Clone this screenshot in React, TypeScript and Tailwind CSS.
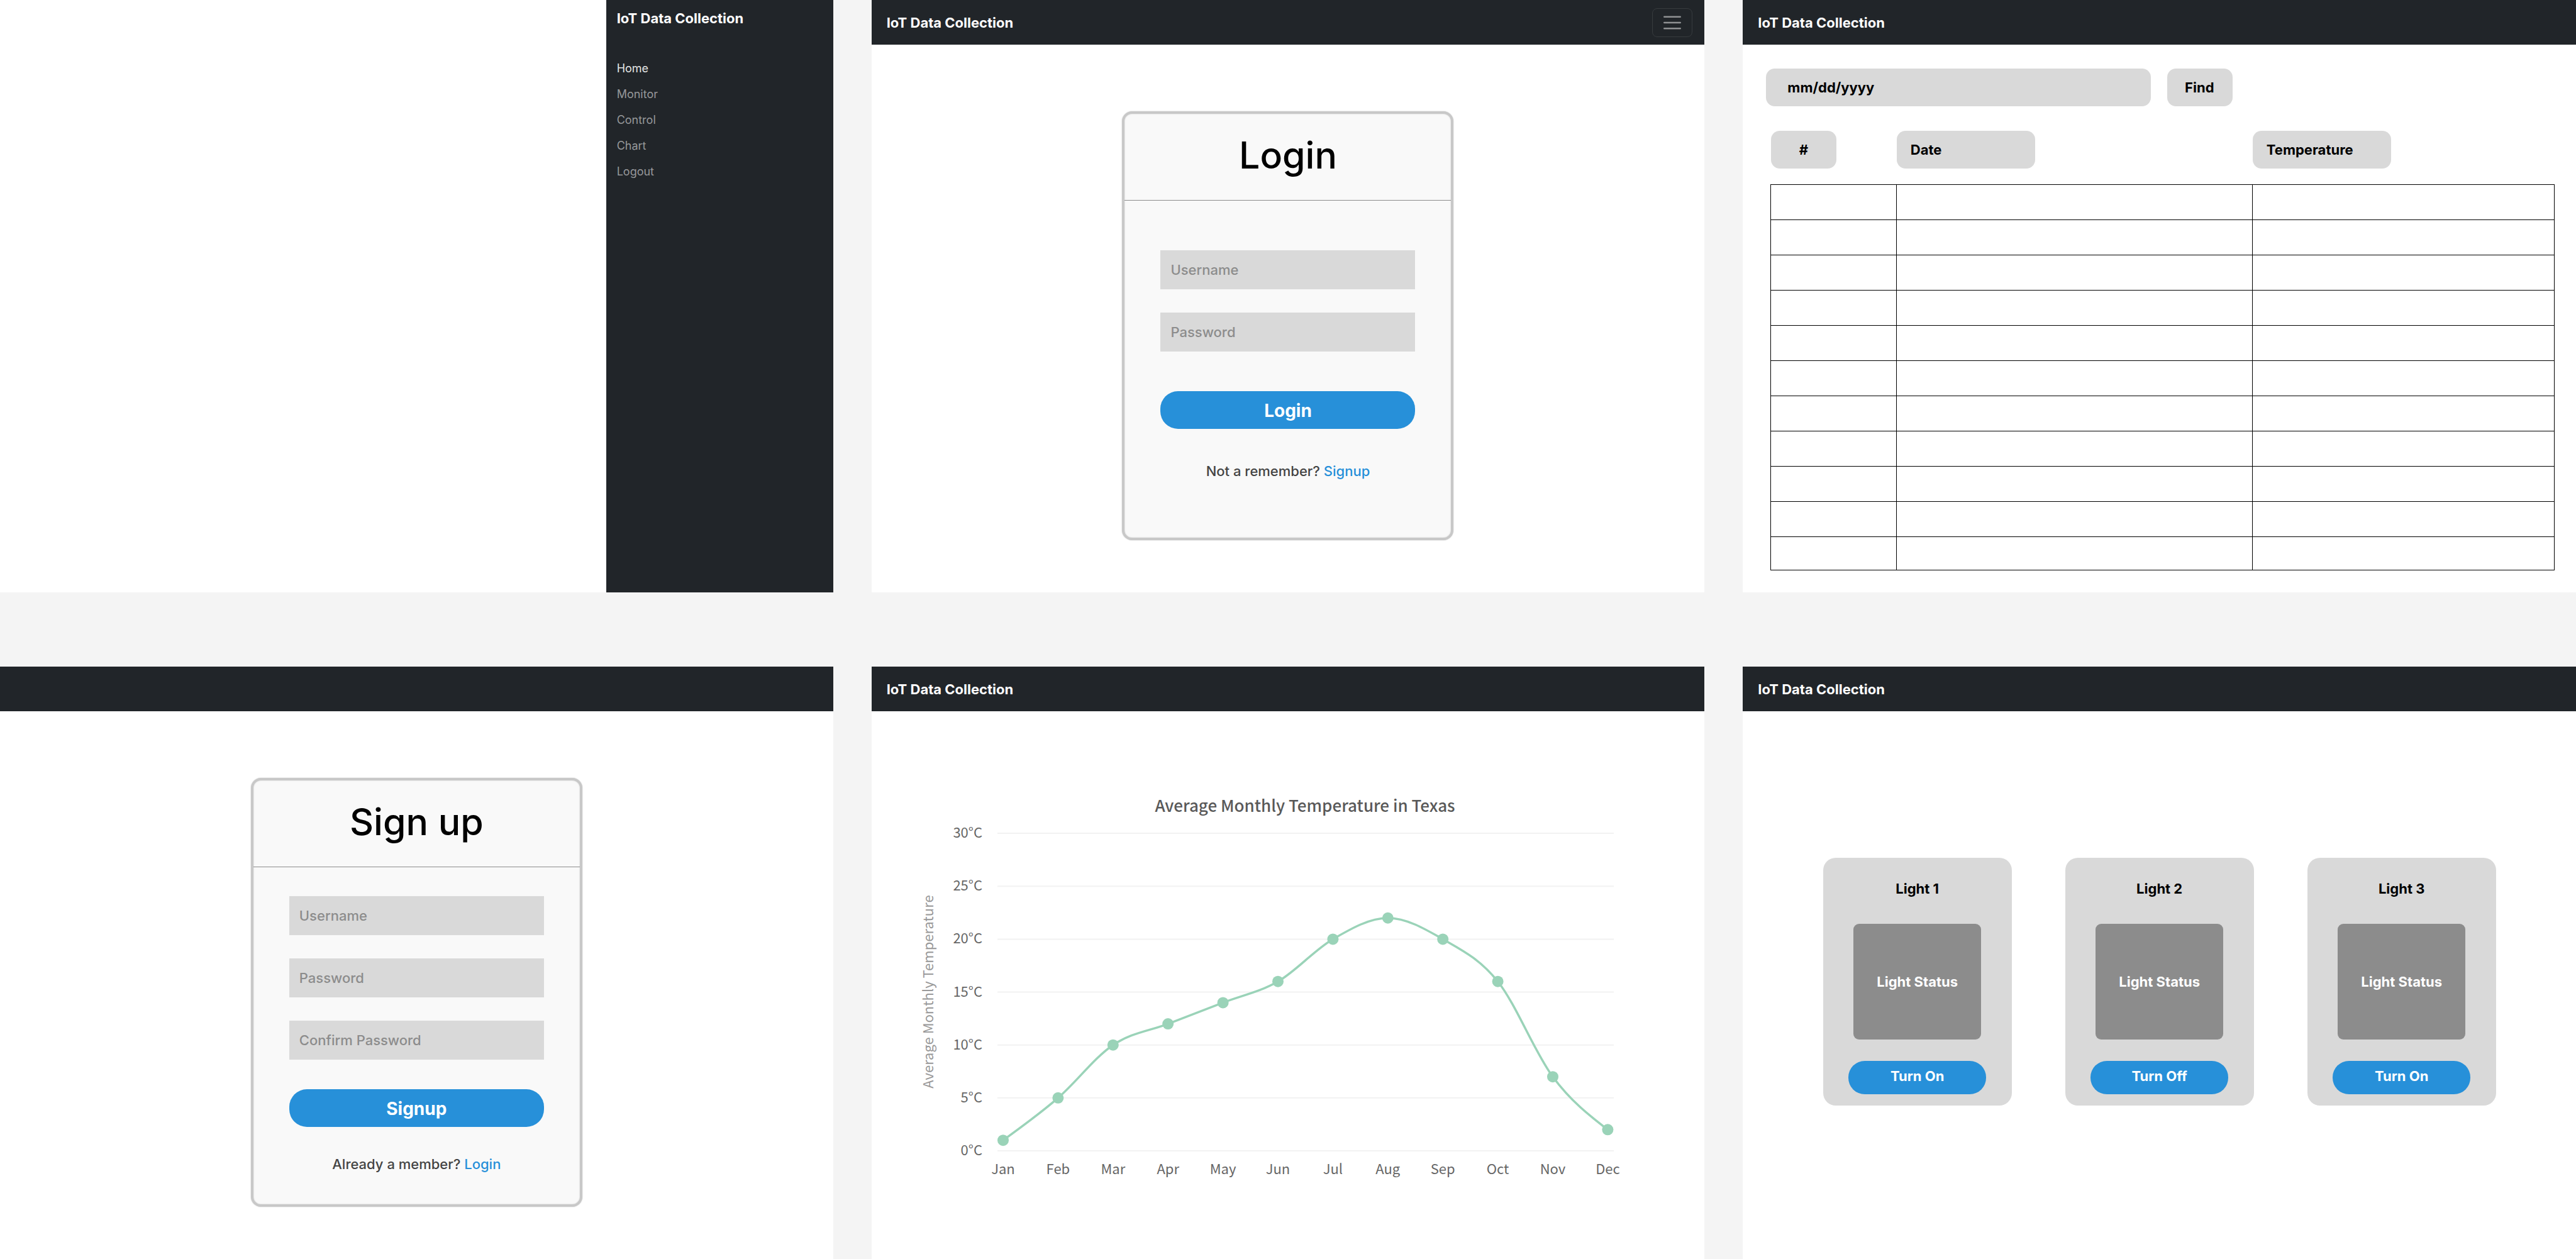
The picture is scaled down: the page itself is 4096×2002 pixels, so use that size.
import type { ReactNode } from "react";

function Screen({ children }: { children: ReactNode }) {
  return <section className="flex min-h-[942px] flex-col bg-white">{children}</section>;
}

function NavBar({ title, children }: { title?: string; children?: ReactNode }) {
  return (
    <header className="flex h-[71px] items-center justify-between bg-[#212529] pr-3 pl-6">
      {title && <span className="text-[22px] leading-7 font-bold text-white">{title}</span>}
      {children}
    </header>
  );
}

function MenuScreen() {
  const links = ["Home", "Monitor", "Control", "Chart", "Logout"];
  return (
    <Screen>
      <aside className="flex w-[361px] flex-1 flex-col gap-[45px] self-end bg-[#212529] pt-[15px] pl-[17px]">
        <span className="text-[22px] leading-7 font-bold text-white">IoT Data Collection</span>
        <nav className="flex flex-col">
          {links.map((l) => (
            <a
              key={l}
              href="#"
              className={
                l === "Home"
                  ? "text-lg leading-[41px] text-[#e4e5e5]"
                  : "text-lg leading-[41px] text-[#96989a]"
              }
            >
              {l}
            </a>
          ))}
        </nav>
      </aside>
    </Screen>
  );
}

function Field({ label }: { label: string }) {
  return (
    <input
      aria-label={label}
      type={label.includes("Password") ? "password" : "text"}
      placeholder={label}
      className="block h-[62px] w-full bg-[#d9d9d9] px-4 text-[22px] font-medium text-black placeholder:text-[#8c8c8c] placeholder:opacity-100"
    />
  );
}

function AuthCard(props: {
  title: string;
  fields: string[];
  action: string;
  prompt: string;
  link: string;
  roomy?: boolean;
}) {
  return (
    <form className="mx-auto mt-[106px] flex h-[682px] w-[527px] flex-col rounded-2xl border-4 border-[#c8c8c8] bg-[#f9f9f9] shadow-[0_0_2px_#c8c8c8,inset_0_0_2px_#c8c8c8]">
      <h1 className="flex h-[138px] items-center justify-center border-b border-[#8c8c8c] pb-1 text-[59px] font-medium text-black">
        {props.title}
      </h1>
      <div className={props.roomy ? "flex flex-col px-[57px] pt-[79px]" : "flex flex-col px-[57px] pt-[46px]"}>
        <div className="flex flex-col gap-[37px]">
          {props.fields.map((f) => (
            <Field key={f} label={f} />
          ))}
        </div>
        <button
          type="button"
          className={
            props.roomy
              ? "mt-[63px] h-[60px] rounded-[28px] bg-[#2790d9] pt-0.5 text-[28px] font-bold text-white"
              : "mt-[47px] h-[60px] rounded-[28px] bg-[#2790d9] pt-0.5 text-[28px] font-bold text-white"
          }
        >
          {props.action}
        </button>
        <p
          className={
            props.roomy
              ? "mt-[53px] text-center text-[22px] leading-7 font-medium text-[#444]"
              : "mt-[45px] text-center text-[22px] leading-7 font-medium text-[#444]"
          }
        >
          {props.prompt}{" "}
          <a href="#" className="text-[#2790d9]">
            {props.link}
          </a>
        </p>
      </div>
    </form>
  );
}

function LoginScreen() {
  return (
    <Screen>
      <NavBar title="IoT Data Collection">
        <button
          type="button"
          aria-label="Toggle navigation"
          className="mr-[7px] flex h-[46px] w-16 items-center justify-center rounded-lg border border-[#373b3e]"
        >
          <svg width="28" height="22" viewBox="0 0 28 22" stroke="#909294" strokeWidth="2.6" strokeLinecap="round">
            <path d="M1.3 1.8h25.4M1.3 11h25.4M1.3 20.2h25.4" />
          </svg>
        </button>
      </NavBar>
      <AuthCard
        title="Login"
        fields={["Username", "Password"]}
        action="Login"
        prompt="Not a remember?"
        link="Signup"
        roomy
      />
    </Screen>
  );
}

function SignupScreen() {
  return (
    <Screen>
      <NavBar />
      <AuthCard
        title="Sign up"
        fields={["Username", "Password", "Confirm Password"]}
        action="Signup"
        prompt="Already a member?"
        link="Login"
      />
    </Screen>
  );
}

function TableScreen() {
  const rows = Array.from({ length: 11 }, (_, i) => i);
  return (
    <Screen>
      <NavBar title="IoT Data Collection" />
      <form className="flex gap-[26px] pt-[38px] pl-[37px]">
        <input
          type="text"
          aria-label="Date"
          placeholder="mm/dd/yyyy"
          className="h-[60px] w-[612px] rounded-[14px] bg-[#d9d9d9] px-[34px] text-[22px] font-bold text-black placeholder:text-black placeholder:opacity-100"
        />
        <button
          type="button"
          className="h-[60px] w-[104px] rounded-[14px] bg-[#d9d9d9] pr-0.5 text-[22px] font-bold text-black"
        >
          Find
        </button>
      </form>
      <div className="pt-[39px] pr-[34px] pl-11">
        <table className="w-full table-fixed border-collapse text-[22px]">
          <colgroup>
            <col className="w-[200px]" />
            <col className="w-[566px]" />
            <col />
          </colgroup>
          <thead>
            <tr className="h-[85px] text-left align-top">
              <th className="p-0 font-bold">
                <div className="flex h-[60px] w-[104px] items-center justify-center rounded-[14px] bg-[#d9d9d9]">#</div>
              </th>
              <th className="p-0 font-bold">
                <div className="flex h-[60px] w-[220px] items-center rounded-[14px] bg-[#d9d9d9] px-[22px]">Date</div>
              </th>
              <th className="p-0 font-bold">
                <div className="flex h-[60px] w-[220px] items-center rounded-[14px] bg-[#d9d9d9] px-[22px]">
                  Temperature
                </div>
              </th>
            </tr>
          </thead>
          <tbody>
            {rows.map((r) => (
              <tr key={r} className="h-14 last:h-[53px]">
                <td className="border border-black" />
                <td className="border border-black" />
                <td className="border border-black" />
              </tr>
            ))}
          </tbody>
        </table>
      </div>
    </Screen>
  );
}

const MONTHS = ["Jan", "Feb", "Mar", "Apr", "May", "Jun", "Jul", "Aug", "Sep", "Oct", "Nov", "Dec"];
const TEMPS = [1, 5, 10, 12, 14, 16, 20, 22, 20, 16, 7, 2];
const STEP = 87.4;

const px = (i: number) => 140 + i * STEP;
const py = (t: number) => 579 - t * 16.83;

/* Monotone cubic interpolation through the monthly values. */
function curve() {
  const n = TEMPS.length;
  const y = TEMPS.map(py);
  const s = y.slice(1).map((v, i) => (v - y[i]) / STEP);
  const m = y.map((_, i) => {
    if (i === 0 || i === n - 1) return 0;
    const a = s[i - 1];
    const b = s[i];
    return a * b <= 0 ? 0 : Math.sign(a) * Math.min(Math.abs(a), Math.abs(b), Math.abs(a + b) / 4) * 2;
  });
  m[0] = (3 * s[0] - m[1]) / 2;
  m[n - 1] = (3 * s[n - 2] - m[n - 2]) / 2;
  const h = STEP / 3;
  let d = `M${px(0)} ${y[0]}`;
  for (let i = 1; i < n; i++) {
    d += `C${px(i - 1) + h} ${y[i - 1] + m[i - 1] * h} ${px(i) - h} ${y[i] - m[i] * h} ${px(i)} ${y[i]}`;
  }
  return d;
}

function ChartScreen() {
  return (
    <Screen>
      <NavBar title="IoT Data Collection" />
      <div className="pt-[120px] pl-[69px]">
        <svg
          width="1180"
          height="645"
          viewBox="0 0 1180 645"
          role="img"
          aria-label="Average Monthly Temperature in Texas"
          className="font-['Noto_Sans_CJK_SC',sans-serif]"
        >
          <text x="620" y="40" textAnchor="middle" fontSize="26" fontWeight="500" fill="#595959">
            Average Monthly Temperature in Texas
          </text>
          <text transform="translate(29 326) rotate(-90)" textAnchor="middle" fontSize="22" fill="#999">
            Average Monthly Temperature
          </text>
          {[0, 5, 10, 15, 20, 25, 30].map((t) => (
            <g key={t}>
              <path d={`M131 ${py(t)}H1111`} stroke="#f2f2f2" strokeWidth="2" />
              <text x="107" y={py(t) + 7} textAnchor="end" fontSize="22" fill="#666">
                {t}°C
              </text>
            </g>
          ))}
          <path d={curve()} fill="none" stroke="#9ad3b8" strokeWidth="3.5" />
          {TEMPS.map((t, i) => (
            <g key={MONTHS[i]}>
              <circle cx={px(i)} cy={py(t)} r="9" fill="#9ad3b8" />
              <text x={px(i)} y="616" textAnchor="middle" fontSize="22" fill="#666">
                {MONTHS[i]}
              </text>
            </g>
          ))}
        </svg>
      </div>
    </Screen>
  );
}

function LightCard({ name, action }: { name: string; action: string }) {
  return (
    <article className="flex h-[394px] w-[300px] flex-col items-center rounded-[20px] bg-[#d9d9d9] pt-[35px] text-[22px] font-bold">
      <h2 className="leading-7 text-black">{name}</h2>
      <div className="mt-[42px] flex h-[184px] w-[203px] items-center justify-center rounded-[9px] bg-[#8c8c8c] text-white">
        Light Status
      </div>
      <button type="button" className="mt-[34px] h-[53px] w-[219px] rounded-[26px] bg-[#2790d9] pb-1 text-white">
        {action}
      </button>
    </article>
  );
}

function LightsScreen() {
  return (
    <Screen>
      <NavBar title="IoT Data Collection" />
      <div className="flex justify-center gap-[85px] pt-[233px]">
        <LightCard name="Light 1" action="Turn On" />
        <LightCard name="Light 2" action="Turn Off" />
        <LightCard name="Light 3" action="Turn On" />
      </div>
    </Screen>
  );
}

export default function App() {
  return (
    <main className="grid min-h-screen grid-cols-3 gap-x-[61px] gap-y-[118px] bg-[#f4f4f4] font-['Inter',sans-serif]">
      <MenuScreen />
      <LoginScreen />
      <TableScreen />
      <SignupScreen />
      <ChartScreen />
      <LightsScreen />
    </main>
  );
}
